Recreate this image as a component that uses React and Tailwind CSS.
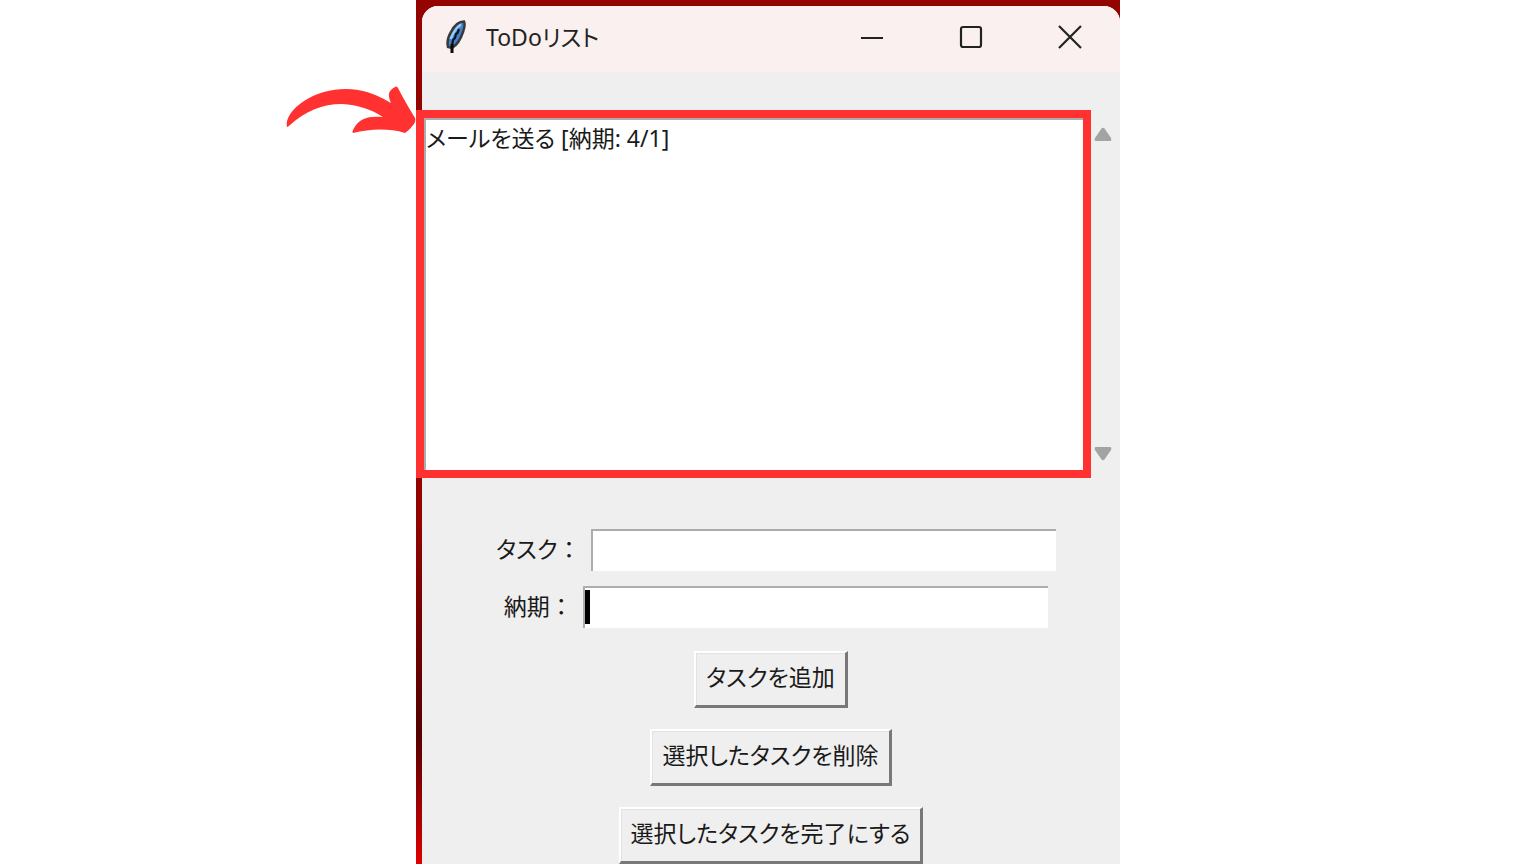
import { useState } from 'react';

const ARROW_UP = 'M7.5 1.5Q9 0 10.500 1.500L17 11Q18 14 16 14H2Q0 14 1 11Z';

const Feather = () => (
    <svg width="20" height="34" viewBox="0 0 20 34" aria-hidden="true">
        <path d="M18 1.500C13 1.500 8 6 5 12C2 17 1 23 2 27L6 28C11 25 15 18 17 12C18.500 8 19 4 18 1.500Z" fill="#3f83cc" stroke="#3a3a3a" strokeWidth="2.500" />
        <path d="M15 4.500C11 7 7.500 12 4.500 19" fill="none" stroke="#9cc8f2" strokeWidth="2.500" />
        <path d="M13 9L11.500 13L10 14L9 18L7 20L6 26" fill="none" stroke="#0b1420" strokeWidth="2.200" />
        <path d="M6 24V33" fill="none" stroke="#0a0a0a" strokeWidth="3" />
    </svg>
);

const TitleBar = () => (
    <header className="flex h-[66px] items-center bg-[#f9f0ef] pb-1 pl-6 text-[#222]">
        <Feather />
        <h1 className="ml-5 flex-1 text-[23px] leading-8 [font-feature-settings:'palt']">ToDoリスト</h1>
        <div className="flex gap-[51px] pr-[26px]">
            <button type="button" aria-label="最小化" className="flex w-12 justify-center">
                <svg width="24" height="24" viewBox="0 0 24 24" fill="none" stroke="currentColor" strokeWidth="2.200"><path d="M1 13H23" /></svg>
            </button>
            <button type="button" aria-label="最大化" className="flex w-12 justify-center">
                <svg width="24" height="24" viewBox="0 0 24 24" fill="none" stroke="currentColor" strokeWidth="2.200"><rect x="2" y="2" width="20" height="20" rx="2" /></svg>
            </button>
            <button type="button" aria-label="閉じる" className="flex w-12 justify-center">
                <svg width="24" height="24" viewBox="0 0 24 24" fill="none" stroke="currentColor" strokeWidth="2.200"><path d="M1 1L23 23M23 1L1 23" /></svg>
            </button>
        </div>
    </header>
);

const Field = ({ id, label, value, onChange, caret }) => (
    <div className="flex justify-center">
        <label htmlFor={id} className="shrink-0 px-2.5 text-[23px] leading-10">
            <span className="[font-feature-settings:'palt']">{label}</span>：
        </label>
        <div className="relative w-2/3">
            <input
                id={id}
                value={value}
                onChange={(e) => onChange(e.target.value)}
                className="h-[42px] w-full border-l-2 border-t-2 border-[#adadad] bg-white px-2 text-[23px] outline-none"
            />
            {caret && <span className="absolute left-0.5 top-1 h-[34px] w-[5px] bg-black" />}
        </div>
    </div>
);

const TaskButton = ({ children, onClick }) => (
    <button
        type="button"
        onClick={onClick}
        className="h-[57px] border-b-[3px] border-l-2 border-r-[3px] border-t-2 border-b-[#787878] border-l-white border-r-[#787878] border-t-white px-2.5 pb-1 text-[23px] leading-8 shadow-[inset_1px_1px_0_#e2e2e2] [font-feature-settings:'palt']"
    >
        {children}
    </button>
);

const App = () => {
    const [tasks, setTasks] = useState([{ name: 'メールを送る', due: '4/1' }]);
    const [selected, setSelected] = useState([]);
    const [name, setName] = useState('');
    const [due, setDue] = useState('');

    const addTask = () => {
        if (!name.trim()) return;
        setTasks([...tasks, { name, due }]);
        setName('');
        setDue('');
    };

    const removeTask = () => {
        setTasks(tasks.filter((_, i) => !selected.includes(String(i))));
        setSelected([]);
    };

    const completeTask = () => {
        setTasks(tasks.map((t, i) => (selected.includes(String(i)) ? { ...t, done: true } : t)));
    };

    return (
        <div className="grid h-screen grid-cols-[13fr_22fr_13fr] overflow-hidden bg-white font-['Noto_Sans','Noto_Sans_CJK_JP',sans-serif] text-[#1a1a1a]">
            <div className="flex items-start justify-end pt-[86px]">
                <svg width="130" height="48" viewBox="0 0 130 48" fill="#ff3131" aria-hidden="true">
                    <path d="M1 41C-1 33 6 23 18 15C36 3 61 0 81 6C91 9 98 13 105 17C102 10 101 5 110 0.500Q111 0 112 2C117 12 123 22 129 32Q130 35 128 38C125 42 122 45 119 47C102 42 84 43 67 47Q66 46 67 44C73 32 82 30 97 31C85 23 72 19 56 18C36 18 20 25 4 39Q2 41 1 41Z" />
                </svg>
            </div>

            <div className="bg-linear-to-b from-[#930400] from-60% via-[#560000] via-85% to-[#e00000] pl-1.5 pt-1.5">
                <main className="min-h-full rounded-t-2xl bg-[#efefef]">
                    <div className="overflow-hidden rounded-t-2xl">
                        <TitleBar />
                    </div>

                    <section className="mt-[38px] flex h-[368px]">
                        <div className="relative flex-1 py-2 pl-0.5 pr-2">
                            <select
                                multiple
                                size={10}
                                aria-label="タスク一覧"
                                value={selected}
                                onChange={(e) => setSelected([...e.target.selectedOptions].map((o) => o.value))}
                                className="h-full w-full appearance-none overflow-hidden border-l-2 border-t-2 border-[#adadad] bg-white text-[23px] outline-none [font-feature-settings:'palt']"
                            >
                                {tasks.map((t, i) => (
                                    <option key={i} value={String(i)} className="p-0">
                                        {`${t.done ? '✓ ' : ''}${t.name} [納期: ${t.due}]`}
                                    </option>
                                ))}
                            </select>
                            <div className="pointer-events-none absolute inset-y-0 -left-1.5 right-0 border-8 border-[#ff3131]" />
                        </div>
                        <div className="flex w-[29px] flex-col items-center justify-between py-[17px] pr-1.5">
                            <svg width="18" height="14" viewBox="0 0 18 14" fill="#a3a3a3" aria-hidden="true"><path d={ARROW_UP} /></svg>
                            <svg width="18" height="14" viewBox="0 0 18 14" fill="#a3a3a3" aria-hidden="true"><path d={ARROW_UP} transform="rotate(180 9 7)" /></svg>
                        </div>
                    </section>

                    <form className="mt-[51px] flex flex-col gap-[15px]" onSubmit={(e) => e.preventDefault()}>
                        <Field id="task" label="タスク" value={name} onChange={setName} />
                        <Field id="due" label="納期" value={due} onChange={setDue} caret />
                    </form>

                    <div className="mt-[23px] flex flex-col items-center gap-[21px]">
                        <TaskButton onClick={addTask}>タスクを追加</TaskButton>
                        <TaskButton onClick={removeTask}>選択したタスクを削除</TaskButton>
                        <TaskButton onClick={completeTask}>選択したタスクを完了にする</TaskButton>
                    </div>
                </main>
            </div>
        </div>
    );
};

export default App;
